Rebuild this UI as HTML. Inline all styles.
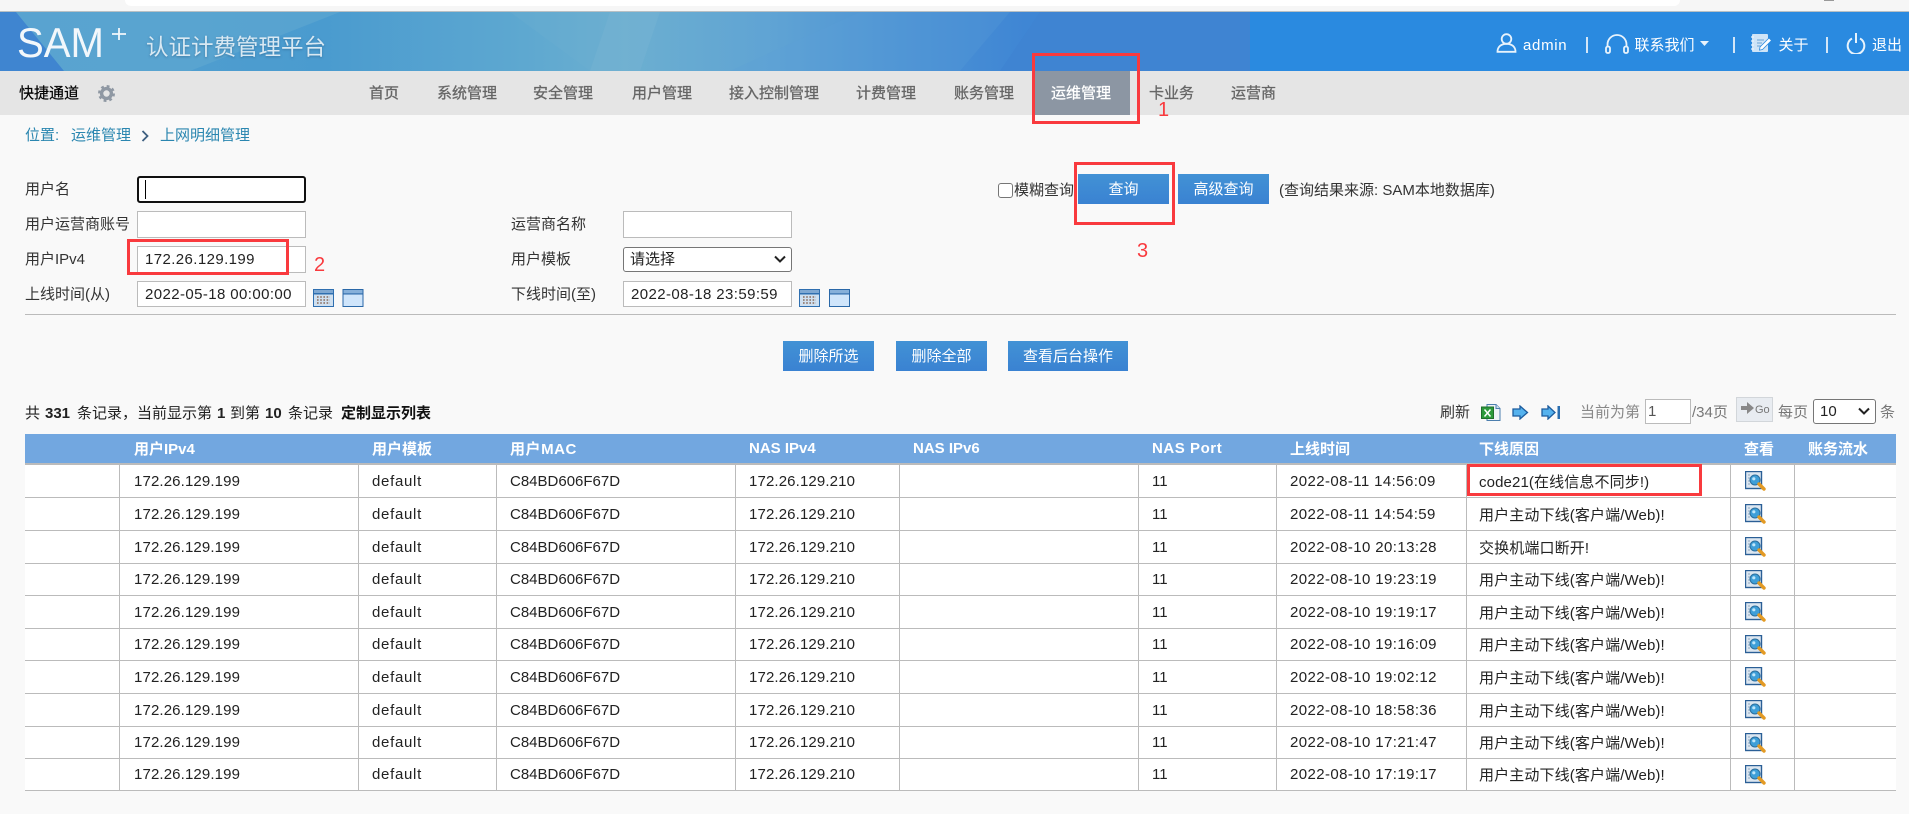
<!DOCTYPE html>
<html lang="zh">
<head>
<meta charset="utf-8">
<title>SAM+ 认证计费管理平台</title>
<style>
*{box-sizing:border-box}
html,body{margin:0;padding:0;width:1909px;height:814px;overflow:hidden;background:#f9f9f9}
body{position:relative;font-family:"Liberation Sans","Noto Sans CJK SC",sans-serif;font-size:15px;color:#333}
.a,.t,svg.i{position:absolute}
.t{line-height:20px;height:20px;white-space:nowrap}
.nav{color:#666;font-size:15px;top:84px;-webkit-text-stroke:.3px #666}
.w{color:#fff;top:36px}
.sep{position:absolute;width:1.5px;background:#e6f0fa;opacity:.9}
.in{position:absolute;background:#fff;border:1px solid #bbb;height:27px;width:169px;padding:0 0 0 7px;font:15px/25px "Liberation Sans","Noto Sans CJK SC",sans-serif;color:#222;letter-spacing:.4px;outline:0;margin:0}
.btn{position:absolute;background:linear-gradient(#4292d5,#3a82d2);color:#fff;text-align:center;font-size:15px;height:30px;line-height:32px}
.red{position:absolute;border:3px solid #f93a3e}
.num{position:absolute;color:#f93a3e;font-size:20px;line-height:20px}
select{-webkit-appearance:none;appearance:none}
table{position:absolute;left:25px;top:434px;width:1871px;border-collapse:separate;border-spacing:0;table-layout:fixed}
th{background:#72a7e0;color:#fff;height:31px;text-align:left;padding:0 0 0 13px;font-size:15px;font-weight:700;border-bottom:2px solid #bbb;white-space:nowrap}
td{background:#fff;padding:0 0 0 13px;border-right:1px solid #bbb;border-bottom:1px solid #bbb;color:#222;font-size:15px;white-space:nowrap;position:relative}
td:last-child{border-right:0}
tr.h33 td{height:33px}tr.h32 td{height:32px}
.ip{letter-spacing:.13px}.df{letter-spacing:.7px}.tm{letter-spacing:.4px}.rs{letter-spacing:.12px;padding-left:12px}
.ls{letter-spacing:.55px}
td svg{position:absolute;left:14px;top:6px}
</style>
</head>
<body>
<svg width="0" height="0" style="position:absolute">
<defs>
<symbol id="mag" viewBox="0 0 22 20">
<rect x=".5" y=".5" width="16" height="17" fill="#dce6f0" stroke="#2b5f96" stroke-width="1.4"/>
<path d="M3 4h2M3 7h2M3 10h2M3 13h2" stroke="#8fa8c0"/>
<circle cx="10" cy="9" r="5" fill="#3f9fd8" stroke="#2b6f9e"/>
<circle cx="8.8" cy="7.8" r="1.6" fill="#bfe6fa"/>
<path d="M14 13l5 5" stroke="#e39a24" stroke-width="3.4" stroke-linecap="round"/>
</symbol>
<symbol id="cal" viewBox="0 0 21 18">
<rect width="21" height="18" fill="#2f6fb0"/>
<rect x="1" y="1" width="19" height="3" fill="#7fa8d2"/>
<rect x="1" y="5.5" width="19" height="11.5" fill="#cfe0f0"/>
<path d="M4 8h13M4 11h13M4 14h13" stroke="#8a6a5a" stroke-width="1.6" stroke-dasharray="1.6 1.6"/>
</symbol>
<symbol id="win" viewBox="0 0 21 18">
<rect width="21" height="18" fill="#2a68a8"/>
<rect x="1" y="1" width="19" height="3.4" fill="#86b0da"/>
<rect x="1" y="5.5" width="19" height="11.5" fill="#cfe5fb"/>
</symbol>
</defs>
</svg>

<!-- browser strip -->
<div class="a" style="left:0;top:0;width:1909px;height:11px;background:#f6f6f6"></div>
<div class="a" style="left:125px;top:0;width:1555px;height:6px;background:#fff;border-radius:0 0 6px 6px"></div>
<div class="a" style="left:1824px;top:0;width:10px;height:1px;background:#999"></div>
<div class="a" style="left:0;top:11px;width:1909px;height:1px;background:#b8c0c4"></div>

<!-- header -->
<svg class="i" style="left:0;top:12px" width="1909" height="59" viewBox="0 0 1909 59">
<defs><linearGradient id="hg" x1="0" x2="1" y1="0" y2="0">
<stop offset="0" stop-color="#4f9ccf"/>
<stop offset=".16" stop-color="#4e9dcf"/>
<stop offset=".26" stop-color="#4a9bcf"/>
<stop offset=".42" stop-color="#5ea8d0"/>
<stop offset=".5" stop-color="#6cafd0"/>
<stop offset=".62" stop-color="#5fa3d4"/>
<stop offset=".74" stop-color="#4a90d4"/>
<stop offset=".82" stop-color="#3f86d4"/>
<stop offset="1" stop-color="#4084d0"/>
</linearGradient></defs>
<rect width="1909" height="59" fill="#2a8ae0"/>
<rect width="1250" height="59" fill="url(#hg)"/>
<polygon points="0,0 16,0 64,59 0,59" fill="#3f85d0"/>
<polygon points="16,0 340,0 190,59 64,59" fill="#62aad2" opacity=".55"/>
<polygon points="510,0 590,59 640,59 640,0" fill="#6cb0d2" opacity=".3"/>
<polygon points="610,0 660,0 640,59 590,59" fill="#78b4d2" opacity=".45"/>
<polygon points="1000,59 1040,0 1250,0 1250,59" fill="#3f84d2"/>
<polygon points="860,0 1010,0 960,59 730,59" fill="#5a9fd6" opacity=".25"/>
</svg>
<svg class="i" style="left:14px;top:20px" width="120" height="44" viewBox="0 0 120 44">
<text x="3" y="37" font-family="Liberation Sans" font-size="42" fill="#f2f7fb" textLength="87" lengthAdjust="spacingAndGlyphs">SAM</text>
<path d="M105 8v12M98 14h14" stroke="#f2f7fb" stroke-width="1.800" fill="none"/>
</svg>
<div class="t" style="left:146px;top:36px;height:24px;line-height:24px;font-size:22.5px;color:#d9e9f3;text-shadow:0 1px 2px rgba(40,90,130,.5)">认证计费管理平台</div>

<!-- header right -->
<svg class="i" style="left:1496px;top:33px" width="22" height="20" viewBox="0 0 22 20" fill="none" stroke="#e8f3fc" stroke-width="1.800">
<circle cx="10.500" cy="6" r="4.800"/><path d="M1.500 18.800c0-5 3.500-8 9-8s9 3 9 8z"/>
</svg>
<div class="t w" style="left:1523px;letter-spacing:.7px;font-size:15px">admin</div>
<div class="sep" style="left:1586px;top:37px;height:16px"></div>
<svg class="i" style="left:1605px;top:34px" width="24" height="20" viewBox="0 0 24 20" fill="none" stroke="#e8f3fc" stroke-width="1.800">
<path d="M2.500 13V10.500a9.500 9.500 0 0 1 19 0V13"/><rect x="1" y="12.500" width="4" height="6.500" rx="1.800"/><rect x="19" y="12.500" width="4" height="6.500" rx="1.800"/>
</svg>
<div class="t w" style="left:1634.500px">联系我们</div>
<svg class="i" style="left:1700px;top:41px" width="9" height="5" viewBox="0 0 9 5"><path d="M0 0h9L4.500 5z" fill="#e8f3fc"/></svg>
<div class="sep" style="left:1733px;top:37px;height:16px"></div>
<svg class="i" style="left:1751px;top:34px" width="21" height="19" viewBox="0 0 21 19">
<rect x="1" y="0" width="16" height="18" rx="1" fill="#cfe4f7"/>
<path d="M0 3h3M0 7h3M0 11h3M0 15h3" stroke="#eaf4fc" stroke-width="1.200"/>
<path d="M6 6h7M6 9h5M6 12h4" stroke="#7fb0dc" stroke-width="1.200"/>
<path d="M9 13l9-9 2.500 2.500-9 9-3 .6z" fill="#fff" stroke="#2a8ae0" stroke-width=".8"/>
</svg>
<div class="t w" style="left:1778.500px">关于</div>
<div class="sep" style="left:1826px;top:37px;height:16px"></div>
<svg class="i" style="left:1846px;top:33px" width="20" height="21" viewBox="0 0 20 21" fill="none" stroke="#e8f3fc" stroke-width="2">
<path d="M6 5.500a8.300 8.300 0 1 0 8 0"/><path d="M10 0v10"/>
</svg>
<div class="t w" style="left:1872px">退出</div>

<!-- nav -->
<div class="a" style="left:0;top:71px;width:1909px;height:44px;background:#e5e5e5"></div>
<div class="t" style="left:19px;top:84px;color:#000;-webkit-text-stroke:.2px #000">快捷通道</div>
<svg class="i" style="left:98px;top:85px" width="17" height="17" viewBox="0 0 18 18" fill="none">
<circle cx="9" cy="9" r="5.200" stroke="#8f98a3" stroke-width="3.600"/>
<circle cx="9" cy="9" r="7.800" stroke="#8f98a3" stroke-width="2.400" stroke-dasharray="3 3.120"/>
</svg>
<div class="a" style="left:1035px;top:71px;width:95px;height:44px;background:#8c96a3"></div>
<div class="t nav" style="left:369px">首页</div>
<div class="t nav" style="left:437px">系统管理</div>
<div class="t nav" style="left:533px">安全管理</div>
<div class="t nav" style="left:632px">用户管理</div>
<div class="t nav" style="left:729px">接入控制管理</div>
<div class="t nav" style="left:856px">计费管理</div>
<div class="t nav" style="left:954px">账务管理</div>
<div class="t nav" style="left:1051px;color:#fff;-webkit-text-stroke:.3px #fff">运维管理</div>
<div class="t nav" style="left:1149px">卡业务</div>
<div class="t nav" style="left:1231px">运营商</div>

<!-- breadcrumb -->
<div class="t" style="left:25px;top:126px;color:#2a86b0">位置:</div>
<div class="t" style="left:71px;top:126px;color:#2a86b0">运维管理</div>
<svg class="i" style="left:141px;top:130px" width="9" height="12" viewBox="0 0 9 12"><path d="M1.500 1l5 5-5 5" fill="none" stroke="#3d5f80" stroke-width="1.800"/></svg>
<div class="t" style="left:160px;top:126px;color:#2a86b0">上网明细管理</div>

<!-- form -->
<div class="t" style="left:25px;top:180px">用户名</div>
<div class="t" style="left:25px;top:215px">用户运营商账号</div>
<div class="t" style="left:25px;top:250px">用户IPv4</div>
<div class="t" style="left:25px;top:285px">上线时间(从)</div>
<div class="in" style="left:137px;top:176px;border:2px solid #101010;border-radius:3px"></div>
<div class="a" style="left:145px;top:180px;width:1px;height:19px;background:#000"></div>
<div class="in" style="left:137px;top:211px"></div>
<div class="in" style="left:137px;top:246px">172.26.129.199</div>
<div class="in" style="left:137px;top:281px;height:26px">2022-05-18 00:00:00</div>
<svg class="i" style="left:313px;top:289px" width="21" height="18"><use href="#cal"/></svg>
<svg class="i" style="left:342px;top:289px" width="22" height="18"><use href="#win"/></svg>

<div class="t" style="left:511px;top:215px">运营商名称</div>
<div class="t" style="left:511px;top:250px">用户模板</div>
<div class="t" style="left:511px;top:285px">下线时间(至)</div>
<div class="in" style="left:623px;top:211px"></div>
<select class="a" style="left:623px;top:247px;width:169px;height:25px;font:15px 'Liberation Sans','Noto Sans CJK SC',sans-serif;color:#222;background:#fff;border:1px solid #767676;border-radius:3px;padding:0 0 0 6px;margin:0"><option>请选择</option></select>
<svg class="i" style="left:774px;top:255px" width="12" height="8" viewBox="0 0 12 8"><path d="M1 1.500l5 5 5-5" fill="none" stroke="#222" stroke-width="2"/></svg>
<div class="in" style="left:623px;top:281px;height:26px">2022-08-18 23:59:59</div>
<svg class="i" style="left:799px;top:289px" width="21" height="18"><use href="#cal"/></svg>
<svg class="i" style="left:829px;top:289px" width="21" height="18"><use href="#win"/></svg>

<div class="a" style="left:998px;top:183px;width:15px;height:15px;background:#fff;border:1px solid #767676;border-radius:3px"></div>
<div class="t" style="left:1014px;top:181px">模糊查询</div>
<div class="btn" style="left:1078px;top:174px;width:91px">查询</div>
<div class="btn" style="left:1178px;top:174px;width:91px">高级查询</div>
<div class="t" style="left:1279px;top:181px">(查询结果来源: SAM本地数据库)</div>

<div class="a" style="left:25px;top:314px;width:1871px;height:1px;background:#bbb"></div>

<div class="btn" style="left:783px;top:341px;width:91px">删除所选</div>
<div class="btn" style="left:896px;top:341px;width:91px">删除全部</div>
<div class="btn" style="left:1008px;top:341px;width:120px">查看后台操作</div>

<!-- summary + toolbar -->
<div class="t" style="left:25px;top:404px;color:#222">共</div>
<div class="t" style="left:45px;top:404px;color:#222;font-weight:700">331</div>
<div class="t" style="left:77px;top:404px;color:#222">条记录，</div>
<div class="t" style="left:137px;top:404px;color:#222">当前显示第</div>
<div class="t" style="left:217px;top:404px;color:#222;font-weight:700">1</div>
<div class="t" style="left:230px;top:404px;color:#222">到第</div>
<div class="t" style="left:265px;top:404px;color:#222;font-weight:700">10</div>
<div class="t" style="left:288px;top:404px;color:#222">条记录</div>
<div class="t" style="left:341px;top:404px;color:#111;font-weight:700">定制显示列表</div>
<div class="t" style="left:1440px;top:403px;color:#333">刷新</div>
<svg class="i" style="left:1481px;top:404px" width="20" height="17" viewBox="0 0 20 17">
<path d="M6 .5h9l4 4v12H6z" fill="#eef3f8" stroke="#4d7fae"/>
<path d="M15 .5v4h4" fill="#cfdfee" stroke="#4d7fae"/>
<rect x=".5" y="3" width="12" height="11.500" fill="#2c9a3c" stroke="#1f6f2c"/>
<path d="M3.500 5.500l6 7M9.500 5.500l-6 7" stroke="#fff" stroke-width="1.500"/>
</svg>
<svg class="i" style="left:1512px;top:405px" width="17" height="15" viewBox="0 0 17 15">
<path d="M1 4h7V1l7.500 6.500L8 14v-3H1z" fill="#55b2ee" stroke="#1c5c9e" stroke-width="1.300"/>
</svg>
<svg class="i" style="left:1541px;top:405px" width="20" height="15" viewBox="0 0 20 15">
<path d="M1 4h6V1l7 6.500L7 14v-3H1z" fill="#55b2ee" stroke="#1c5c9e" stroke-width="1.300"/>
<rect x="16.500" y="1" width="2.500" height="13" fill="#2a6eb0"/>
</svg>
<div class="t" style="left:1580px;top:403px;color:#888">当前为第</div>
<div class="in" style="left:1645px;top:399px;width:46px;height:25px;line-height:23px;padding-left:2px;color:#555;letter-spacing:0">1</div>
<div class="t" style="left:1692px;top:403px;color:#777">/34页</div>
<svg class="i" style="left:1736px;top:397px" width="37" height="25" viewBox="0 0 37 25">
<rect x=".5" y=".5" width="36" height="24" fill="#e8ecf1" stroke="#d2d6da"/>
<path d="M5 9h6V5l7 6-7 6v-4H5z" fill="#888"/>
<text x="19" y="16" font-family="Liberation Sans" font-size="11" fill="#777">Go</text>
</svg>
<div class="t" style="left:1778px;top:403px;color:#777">每页</div>
<select class="a" style="left:1813px;top:399px;width:63px;height:25px;font:15px 'Liberation Sans',sans-serif;color:#222;background:#fff;border:1px solid #767676;border-radius:3px;padding:0 0 0 6px;margin:0"><option>10</option></select>
<svg class="i" style="left:1858px;top:407px" width="12" height="8" viewBox="0 0 12 8"><path d="M1 1.500l5 5 5-5" fill="none" stroke="#222" stroke-width="2"/></svg>
<div class="t" style="left:1880px;top:403px;color:#777">条</div>

<!-- table -->
<table>
<colgroup><col style="width:95px"><col style="width:239px"><col style="width:138px"><col style="width:239px"><col style="width:164px"><col style="width:239px"><col style="width:138px"><col style="width:190px"><col style="width:264px"><col style="width:64px"><col style="width:101px"></colgroup>
<thead><tr><th></th><th style="padding-left:14px">用户IPv4</th><th>用户模板</th><th class="ls">用户MAC</th><th>NAS IPv4</th><th>NAS IPv6</th><th class="ls">NAS Port</th><th>上线时间</th><th style="padding-left:12px">下线原因</th><th>查看</th><th>账务流水</th></tr></thead>
<tbody>
<tr class="h33"><td></td><td class="ip" style="padding-left:14px">172.26.129.199</td><td class="df">default</td><td>C84BD606F67D</td><td class="ip">172.26.129.210</td><td></td><td>11</td><td class="tm">2022-08-11 14:56:09</td><td class="rs">code21(在线信息不同步!)</td><td><svg width="22" height="20"><use href="#mag"/></svg></td><td></td></tr>
<tr class="h33"><td></td><td class="ip" style="padding-left:14px">172.26.129.199</td><td class="df">default</td><td>C84BD606F67D</td><td class="ip">172.26.129.210</td><td></td><td>11</td><td class="tm">2022-08-11 14:54:59</td><td class="rs">用户主动下线(客户端/Web)!</td><td><svg width="22" height="20"><use href="#mag"/></svg></td><td></td></tr>
<tr class="h33"><td></td><td class="ip" style="padding-left:14px">172.26.129.199</td><td class="df">default</td><td>C84BD606F67D</td><td class="ip">172.26.129.210</td><td></td><td>11</td><td class="tm">2022-08-10 20:13:28</td><td class="rs">交换机端口断开!</td><td><svg width="22" height="20"><use href="#mag"/></svg></td><td></td></tr>
<tr class="h32"><td></td><td class="ip" style="padding-left:14px">172.26.129.199</td><td class="df">default</td><td>C84BD606F67D</td><td class="ip">172.26.129.210</td><td></td><td>11</td><td class="tm">2022-08-10 19:23:19</td><td class="rs">用户主动下线(客户端/Web)!</td><td><svg width="22" height="20"><use href="#mag"/></svg></td><td></td></tr>
<tr class="h33"><td></td><td class="ip" style="padding-left:14px">172.26.129.199</td><td class="df">default</td><td>C84BD606F67D</td><td class="ip">172.26.129.210</td><td></td><td>11</td><td class="tm">2022-08-10 19:19:17</td><td class="rs">用户主动下线(客户端/Web)!</td><td><svg width="22" height="20"><use href="#mag"/></svg></td><td></td></tr>
<tr class="h32"><td></td><td class="ip" style="padding-left:14px">172.26.129.199</td><td class="df">default</td><td>C84BD606F67D</td><td class="ip">172.26.129.210</td><td></td><td>11</td><td class="tm">2022-08-10 19:16:09</td><td class="rs">用户主动下线(客户端/Web)!</td><td><svg width="22" height="20"><use href="#mag"/></svg></td><td></td></tr>
<tr class="h33"><td></td><td class="ip" style="padding-left:14px">172.26.129.199</td><td class="df">default</td><td>C84BD606F67D</td><td class="ip">172.26.129.210</td><td></td><td>11</td><td class="tm">2022-08-10 19:02:12</td><td class="rs">用户主动下线(客户端/Web)!</td><td><svg width="22" height="20"><use href="#mag"/></svg></td><td></td></tr>
<tr class="h33"><td></td><td class="ip" style="padding-left:14px">172.26.129.199</td><td class="df">default</td><td>C84BD606F67D</td><td class="ip">172.26.129.210</td><td></td><td>11</td><td class="tm">2022-08-10 18:58:36</td><td class="rs">用户主动下线(客户端/Web)!</td><td><svg width="22" height="20"><use href="#mag"/></svg></td><td></td></tr>
<tr class="h32"><td></td><td class="ip" style="padding-left:14px">172.26.129.199</td><td class="df">default</td><td>C84BD606F67D</td><td class="ip">172.26.129.210</td><td></td><td>11</td><td class="tm">2022-08-10 17:21:47</td><td class="rs">用户主动下线(客户端/Web)!</td><td><svg width="22" height="20"><use href="#mag"/></svg></td><td></td></tr>
<tr class="h32"><td></td><td class="ip" style="padding-left:14px">172.26.129.199</td><td class="df">default</td><td>C84BD606F67D</td><td class="ip">172.26.129.210</td><td></td><td>11</td><td class="tm">2022-08-10 17:19:17</td><td class="rs">用户主动下线(客户端/Web)!</td><td><svg width="22" height="20"><use href="#mag"/></svg></td><td></td></tr>
</tbody>
</table>

<!-- red annotations -->
<div class="red" style="left:1032px;top:53px;width:108px;height:71px"></div>
<div class="num" style="left:1158px;top:100px">1</div>
<div class="red" style="left:127px;top:239px;width:162px;height:36px"></div>
<div class="num" style="left:314px;top:255px">2</div>
<div class="red" style="left:1074px;top:162px;width:101px;height:63px"></div>
<div class="num" style="left:1137px;top:241px">3</div>
<div class="red" style="left:1467px;top:464px;width:235px;height:32px"></div>
</body>
</html>
